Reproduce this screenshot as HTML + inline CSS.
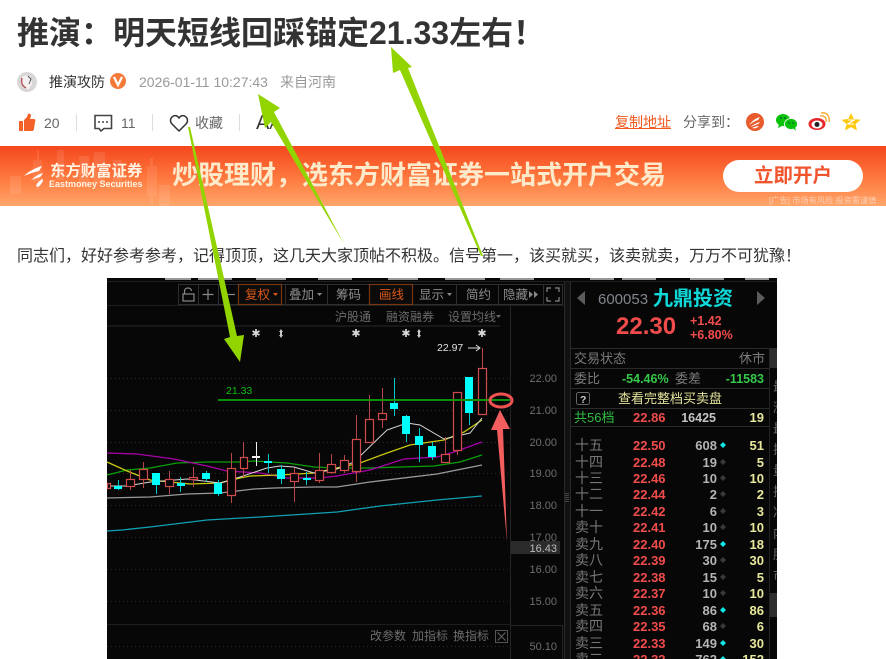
<!DOCTYPE html>
<html lang="zh-CN">
<head>
<meta charset="utf-8">
<title>推演</title>
<style>
html,body{margin:0;padding:0;background:#fff}
body{width:886px;height:659px;overflow:hidden;position:relative;font-family:"Liberation Sans","Noto Sans CJK SC",sans-serif;color:#333}
.a{position:absolute;white-space:nowrap}
svg{position:absolute;left:0;top:0}
svg text{font-family:"Liberation Sans","Noto Sans CJK SC",sans-serif}
.banner{position:absolute;left:0;top:146px;width:886px;height:60px;background:linear-gradient(#f4471d,#ff7a3f 55%,#ffa66b)}
</style>
</head>
<body>
<div class="a" style="left:17px;top:14px;font-size:32px;line-height:38px;font-weight:700;color:#333">推演&#65306;明天短线回踩锚定21.33左右&#65281;</div>

<div class="a" style="left:49px;top:73px;font-size:14px;line-height:18px;color:#333">推演攻防</div>
<div class="a" style="left:139px;top:73px;font-size:14px;line-height:18px;color:#999">2026-01-11 10:27:43</div>
<div class="a" style="left:280px;top:73px;font-size:14px;line-height:18px;color:#999">来自河南</div>

<div class="a" style="left:44px;top:114px;font-size:14px;line-height:18px;color:#666">20</div>
<div class="a" style="left:121px;top:114px;font-size:14px;line-height:18px;color:#666">11</div>
<div class="a" style="left:195px;top:114px;font-size:14px;line-height:18px;color:#666">收藏</div>
<div class="a" style="left:256px;top:111px;font-size:20px;line-height:24px;color:#333">A<span style="font-size:16px">A</span></div>
<div class="a" style="left:615px;top:113px;font-size:14px;line-height:18px;color:#f25a1e;text-decoration:underline">复制地址</div>
<div class="a" style="left:683px;top:113px;font-size:14px;line-height:18px;color:#666">分享到&#65306;</div>

<div class="banner"></div>
<div class="a" style="left:50px;top:161px;font-size:15.4px;line-height:22px;font-weight:700;color:#fff3e2">东方财富证券</div>
<div class="a" style="left:49px;top:178px;font-size:9px;line-height:12px;font-weight:700;color:#fff3e2">Eastmoney Securities</div>
<div class="a" style="left:172px;top:159px;font-size:26px;line-height:32px;font-weight:700;color:#fdeacb">炒股理财&#65292;选东方财富证券一站式开户交易</div>
<div class="a" style="left:723px;top:160px;width:140px;height:32px;border-radius:16px;background:#fff;text-align:center;font-size:19.5px;line-height:32px;font-weight:700;color:#f0552e">立即开户</div>
<div class="a" style="left:769px;top:195px;font-size:8.2px;line-height:11px;color:rgba(255,255,255,.5)">[广告] 市场有风险 投资需谨慎</div>

<div class="a" style="left:17px;top:246px;font-size:16px;line-height:22px;color:#333">同志们&#65292;好好参考参考&#65292;记得顶顶&#65292;这几天大家顶帖不积极。信号第一&#65292;该买就买&#65292;该卖就卖&#65292;万万不可犹豫&#65281;</div>

<svg width="886" height="659" viewBox="0 0 886 659">
<!-- avatar -->
<circle cx="27" cy="82" r="10" fill="#d9d6d6"/>
<path d="M22 77c2-2 7-2 9 0l1 7-3 5h-4l-3-5z" fill="#f2f0f0"/>
<path d="M22 78c-1 4 0 8 4 10" stroke="#b5525a" stroke-width="1.4" fill="none"/>
<path d="M28 76l3 3-2 5" stroke="#555" stroke-width="1" fill="none"/>
<!-- V badge -->
<circle cx="118" cy="81" r="8" fill="#f47a3a"/>
<path d="M114 77l4 8 4-8" stroke="#fff" stroke-width="2.2" fill="none"/>
<!-- thumb -->
<path d="M19 121h4v10h-4zM24 120l3-3 1-3c2-1 3 0 3 2l-1 3h4c1 0 2 1 1 3l-1 7c0 1-1 2-2 2H24z" fill="#f4622a"/>
<line x1="76.500" y1="114" x2="76.500" y2="131" stroke="#ddd"/>
<!-- comment -->
<path d="M95 115.500h16.500v13h-7.500l-3 2.500-2-2.500h-4z" fill="none" stroke="#444" stroke-width="1.600"/>
<circle cx="99" cy="122" r="1" fill="#444"/><circle cx="103" cy="122" r="1" fill="#444"/><circle cx="107" cy="122" r="1" fill="#444"/>
<line x1="152.500" y1="114" x2="152.500" y2="131" stroke="#ddd"/>
<!-- heart -->
<path d="M179 131l-7-7c-2-2-2-5 0-7 2-2 5-2 7 1 2-3 5-3 7-1 2 2 2 5 0 7z" fill="none" stroke="#333" stroke-width="1.500"/>
<line x1="239.500" y1="114" x2="239.500" y2="131" stroke="#ddd"/>
<!-- share icons -->
<circle cx="755" cy="122" r="9" fill="#e95b2c"/>
<path d="M749 125c3-4 7-7 11-8-1 1-1 2-2 3-3 1-6 3-9 5zM750 127c3-2 6-4 10-5-1 1-1 2-2 2-2 1-5 2-8 3zM752 128c2-1 5-2 7-2-2 2-4 3-7 2z" fill="#fff"/>
<ellipse cx="783" cy="120" rx="7" ry="6" fill="#0ac20a"/>
<path d="M779 124l-1 4 4-2z" fill="#0ac20a"/>
<ellipse cx="791" cy="124" rx="6.500" ry="5.500" fill="#0ac20a" stroke="#fff" stroke-width=".8"/>
<path d="M793 128l3 3-1-4z" fill="#0ac20a"/>
<circle cx="781" cy="118" r="1" fill="#063"/><circle cx="785" cy="118" r="1" fill="#063"/><circle cx="789" cy="123" r=".9" fill="#063"/><circle cx="793" cy="123" r=".9" fill="#063"/>
<ellipse cx="817" cy="124" rx="8.500" ry="6" fill="#e6262a"/>
<ellipse cx="817" cy="124.500" rx="5.500" ry="4" fill="#fff"/>
<circle cx="817" cy="124.500" r="2.500" fill="#222"/>
<path d="M820 116c4-1 7 2 6 6M821 113c6-1 9 3 8 9" stroke="#f6a623" stroke-width="1.300" fill="none"/>
<path d="M851 113l2.800 6 6.700.7-5 4.400 1.500 6.400-6-3.400-6 3.400 1.500-6.400-5-4.400 6.700-.7z" fill="#fcc90f"/>
<path d="M848 120h6l-6 4h6" stroke="#fff" stroke-width="1.100" fill="none"/>

<!-- banner decor -->
<g fill="#fff" opacity=".09">
<rect x="10" y="176" width="11" height="18"/><rect x="33" y="160" width="9" height="22"/><rect x="57" y="150" width="7" height="30"/><rect x="79" y="156" width="10" height="30"/><rect x="94" y="152" width="11" height="32"/><rect x="113" y="160" width="9" height="28"/><rect x="147" y="166" width="10" height="30"/><rect x="159" y="185" width="11" height="21"/>
<rect x="150" y="158" width="3" height="46"/><rect x="37" y="150" width="2" height="40"/>
</g>
<path d="M24 176c5-5 11-8 18-10-1 2-2 3-3 5-5 1-10 3-15 5zM31 180c4-3 7-6 12-7-1 2-2 3-3 4-3 1-6 2-9 3zM36 186c1-3 4-6 7-7 0 3-2 6-5 8z" fill="#fff"/>

<!-- terminal bg -->
<rect x="107" y="278" width="670" height="381" fill="#070707"/>
<g fill="#c8c8c8" opacity=".75">
<rect x="165" y="278" width="26" height="2"/><rect x="198" y="278" width="34" height="2"/><rect x="256" y="278" width="30" height="2"/><rect x="318" y="278" width="34" height="2"/><rect x="388" y="278" width="30" height="2"/><rect x="445" y="278" width="40" height="2"/><rect x="500" y="278" width="34" height="2"/><rect x="590" y="278" width="24" height="2"/><rect x="622" y="278" width="34" height="2"/><rect x="690" y="278" width="34" height="2"/><rect x="745" y="278" width="24" height="2"/>
</g>
<rect x="107" y="281" width="670" height="1" fill="#1f1f1f"/>

<!-- toolbar -->
<g fill="none" stroke="#2e2e2e">
<rect x="178.500" y="284.500" width="384" height="20"/>
<path d="M198.500 284v21M218.500 284v21M285.500 284v21M327.500 284v21M412.500 284v21M456.500 284v21M498.500 284v21M543.500 284v21"/>
</g>
<rect x="238.500" y="284.500" width="43" height="20" fill="#0b0b0b" stroke="#7a3612" stroke-width="1.200"/>
<rect x="369.500" y="284.500" width="43" height="20" fill="#0b0b0b" stroke="#7a3612" stroke-width="1.200"/>
<g fill="none" stroke="#888" stroke-width="1.200">
<rect x="183" y="294" width="11" height="7"/>
<path d="M184.500 294v-3c0-4 7-4 7 0"/>
<path d="M208 289v11M202.500 294.500h11"/>
<path d="M226 294.500h9"/>
<path d="M547 292v-4h4M559 292v-4h-4M547 297v4h4M559 297v4h-4"/>
</g>
<g font-size="12.500" fill="#8c8c8c">
<text x="245" y="299" fill="#d9581a">复权</text>
<text x="289" y="299">叠加</text>
<text x="336" y="299">筹码</text>
<text x="379" y="299" fill="#d9581a">画线</text>
<text x="419" y="299">显示</text>
<text x="466" y="299">简约</text>
<text x="503" y="299">隐藏</text>
</g>
<g fill="#888"><path d="M317 293h5l-2.500 3zM447 293h5l-2.500 3z"/><path d="M273 293h5l-2.500 3z" fill="#d9581a"/><path d="M529 291l4 3.500-4 3.500zM534 291l4 3.500-4 3.500z"/></g>

<rect x="107" y="305" width="458" height="1" fill="#1e1e1e"/>
<rect x="107" y="325" width="393" height="2" fill="#181818"/>
<g font-size="12" fill="#6c6c6c">
<text x="335" y="321">沪股通</text>
<text x="386" y="321">融资融券</text>
<text x="448" y="321">设置均线</text>
</g>
<path d="M496 315h5l-2.500 3z" fill="#666"/>

<!-- event marks -->
<g fill="#d8d8d8" font-size="11" text-anchor="middle">
<text x="256" y="337">✱</text><text x="356" y="337">✱</text><text x="406" y="337">✱</text><text x="482" y="337">✱</text>
</g>
<g fill="#c8c8c8"><path d="M281 329l2 3h-1v3h1l-2 3-2-3h1v-3h-1zM419 329l2 3h-1v3h1l-2 3-2-3h1v-3h-1z"/></g>

<!-- grid -->
<g stroke="#2a2a2a" stroke-dasharray="1 3" stroke-width="1">
<path d="M107 378.500h403M107 410.500h403M107 442.500h403M107 473.500h403M107 505.500h403M107 537.500h403M107 569.500h403M107 601.500h403M107 646.500h403"/>
</g>
<path d="M510.500 305v354" stroke="#242424"/>
<path d="M107 624.500h403" stroke="#1e1e1e"/>
<path d="M511 625.500h51M562.500 625v34" stroke="#262626" fill="none"/>
<rect x="564" y="282" width="6" height="377" fill="#111"/>
<path d="M564.500 282v377M570.500 282v377" stroke="#2a2a2a"/>
<path d="M566 493v9M568 493v9" stroke="#777" stroke-dasharray="1 1"/>

<!-- axis -->
<g font-size="11" fill="#6e6e6e" text-anchor="end">
<text x="557" y="382">22.00</text><text x="557" y="414">21.00</text><text x="557" y="446">20.00</text><text x="557" y="477">19.00</text><text x="557" y="509">18.00</text><text x="557" y="541">17.00</text><text x="557" y="573">16.00</text><text x="557" y="605">15.00</text><text x="557" y="650">50.10</text>
</g>
<rect x="511" y="541" width="49" height="13" fill="#2b2b2b"/>
<text x="557" y="552" font-size="11" fill="#bdbdbd" text-anchor="end">16.43</text>
<g font-size="12" fill="#6c6c6c">
<text x="370" y="640">改参数</text><text x="412" y="640">加指标</text><text x="453" y="640">换指标</text>
</g>
<rect x="495.500" y="630.500" width="12" height="12" fill="none" stroke="#555"/>
<path d="M497.500 632.500l8 8M505.500 632.500l-8 8" stroke="#666"/>

<!-- MA lines -->
<g fill="none" stroke-width="1.300">
<polyline stroke="#10a0b4" points="107,531 122,530 150,527 207,520 260,517 307,514 337,512 380,506 437,500 482,496"/>
<polyline stroke="#9a9a9a" points="107,498 150,497 187,494 220,493 254,489 274,488 314,487 337,487 370,482 437,474 482,465"/>
<polyline stroke="#0aa00a" points="107,475 127,470 150,468 177,463 207,462 240,462 254,461 287,463 314,467 337,468 370,468 434,466 460,462 482,455"/>
<polyline stroke="#a800a8" points="107,453 137,454 174,459 207,466 227,471 260,473 287,478 320,478 337,476 370,470 404,459 437,457 454,452 482,442"/>
<polyline stroke="#c8c810" points="107,462 127,471 150,480 190,484 220,483 240,478 250,476 280,475 314,473 337,468 360,463 387,453 410,445 444,440 464,432 482,420"/>
<polyline stroke="#d8d8d8" stroke-width="1" points="107,486 127,486 150,482 187,479 220,483 240,477 267,468 280,466 294,467 314,473 337,469 354,462 387,430 407,423 420,425 444,439 470,433 482,418"/>
</g>

<!-- wicks -->
<g stroke-width="1" fill="none">
<path stroke="#b84646" d="M130.500 470v20M143.500 462v26M169.500 471v23M193.500 467v20M231.500 453v50M243.500 442v35M294.500 481v21M294.500 468v5M319.500 453v30M331.500 454v20M344.500 455v18M356.500 415v67M369.500 395v47M382.500 388v40M445.500 437v26M457.500 392v63M482.500 348v66"/>
<path stroke="#00c8c8" d="M118.500 480v10M156.500 473v21M180.500 477v15M206.500 471v11M218.500 480v16M268.500 454v19M281.500 465v19M306.500 472v13M394.500 378v38M406.500 415v27M419.500 428v34M432.500 442v18M469.500 377v48"/>
<path stroke="#f0f0f0" d="M256.500 442v24"/>
</g>
<!-- bodies -->
<g fill="#060606" stroke="#d04c4c" stroke-width="1.200">
<rect x="107.500" y="483.500" width="3" height="5"/>
<rect x="126.500" y="479.500" width="8" height="7"/>
<rect x="139.500" y="469.500" width="8" height="10"/>
<rect x="165.500" y="479.500" width="8" height="7"/>
<rect x="189.500" y="477.500" width="8" height="2"/>
<rect x="227.500" y="468.500" width="8" height="27"/>
<rect x="240.500" y="457.500" width="7" height="11"/>
<rect x="290.500" y="473.500" width="8" height="8"/>
<rect x="315.500" y="470.500" width="8" height="10"/>
<rect x="327.500" y="464.500" width="8" height="8"/>
<rect x="340.500" y="460.500" width="8" height="10"/>
<rect x="352.500" y="439.500" width="8" height="32"/>
<rect x="365.500" y="419.500" width="8" height="23"/>
<rect x="378.500" y="413.500" width="8" height="6"/>
<rect x="441.500" y="454.500" width="8" height="8"/>
<rect x="453.500" y="392.500" width="8" height="58"/>
<rect x="478.500" y="368.500" width="8" height="46"/>
</g>
<g fill="#00ffff">
<rect x="114" y="486" width="8" height="3"/>
<rect x="152" y="473" width="8" height="12"/>
<rect x="177" y="483" width="8" height="3"/>
<rect x="202" y="473" width="8" height="6"/>
<rect x="214" y="483" width="8" height="11"/>
<rect x="264" y="461" width="8" height="2"/>
<rect x="277" y="469" width="8" height="10"/>
<rect x="303" y="478" width="8" height="2"/>
<rect x="390" y="403" width="8" height="6"/>
<rect x="402" y="416" width="8" height="18"/>
<rect x="415" y="436" width="8" height="9"/>
<rect x="428" y="446" width="8" height="11"/>
<rect x="465" y="377" width="8" height="36"/>
</g>
<rect x="252" y="456" width="8" height="2" fill="#f0f0f0"/>

<!-- 21.33 line -->
<rect x="218" y="399" width="292" height="2" fill="#0a900a"/>
<text x="226" y="394" font-size="10.500" fill="#12c012">21.33</text>
<text x="437" y="351" font-size="10.500" fill="#e0e0e0">22.97</text>
<path d="M468 348h12M476 345l4 3-4 3" stroke="#ddd" fill="none"/>

<!-- right panel -->
<path d="M585 291l-8 7 8 7zM757 291l8 7-8 7z" fill="#5c5c5c"/>
<text x="598" y="304" font-size="15" fill="#80868e">600053</text>
<text x="653" y="305" font-size="20" font-weight="700" fill="#0fd8d8">九鼎投资</text>
<text x="616" y="334" font-size="24" font-weight="700" fill="#f04c4c">22.30</text>
<text x="690" y="325" font-size="12.500" font-weight="700" fill="#f04c4c">+1.42</text>
<text x="690" y="339" font-size="12.500" font-weight="700" fill="#f04c4c">+6.80%</text>
<g stroke="none" fill="#2a2a2a">
<rect x="571" y="348" width="198" height="1"/>
<rect x="571" y="368" width="198" height="1"/>
<rect x="571" y="388" width="198" height="1"/>
<rect x="571" y="408" width="198" height="1"/>
<rect x="571" y="426" width="198" height="1"/>
</g>
<path d="M769.500 348v311" stroke="#242424"/>
<rect x="770" y="348" width="7" height="20" fill="#2e2e2e"/>
<rect x="770" y="593" width="7" height="24" fill="#2e2e2e"/>
<g font-size="13" fill="#7a7a7a">
<text x="574" y="363">交易状态</text>
<text x="739" y="363">休市</text>
<text x="574" y="383">委比</text>
<text x="675" y="383">委差</text>
</g>
<g font-size="12.500" font-weight="700" fill="#35c84a">
<text x="622" y="383">-54.46%</text>
<text x="764" y="383" text-anchor="end">-11583</text>
</g>
<rect x="576.500" y="392.500" width="13" height="12" rx="2" fill="none" stroke="#666"/>
<text x="580" y="403" font-size="10.500" font-weight="700" fill="#ccc">?</text>
<text x="618" y="403" font-size="13" fill="#e2e29a">查看完整档买卖盘</text>
<text x="574" y="422" font-size="13" fill="#2fbe44">共56档</text>
<text x="633" y="422" font-size="13" font-weight="700" fill="#f04c4c">22.86</text>
<text x="716" y="422" font-size="12.500" font-weight="700" fill="#c4c4c4" text-anchor="end">16425</text>
<text x="764" y="422" font-size="13" font-weight="700" fill="#e8e89c" text-anchor="end">19</text>

<g font-size="14" fill="#767676">
<text x="575" y="450">十五</text><text x="575" y="467">十四</text><text x="575" y="483">十三</text><text x="575" y="499">十二</text><text x="575" y="516">十一</text><text x="575" y="532">卖十</text><text x="575" y="549">卖九</text><text x="575" y="565">卖八</text><text x="575" y="582">卖七</text><text x="575" y="598">卖六</text><text x="575" y="615">卖五</text><text x="575" y="631">卖四</text><text x="575" y="648">卖三</text><text x="575" y="664">卖二</text>
</g>
<g font-size="13" font-weight="700" fill="#f04c4c">
<text x="633" y="450">22.50</text><text x="633" y="467">22.48</text><text x="633" y="483">22.46</text><text x="633" y="499">22.44</text><text x="633" y="516">22.42</text><text x="633" y="532">22.41</text><text x="633" y="549">22.40</text><text x="633" y="565">22.39</text><text x="633" y="582">22.38</text><text x="633" y="598">22.37</text><text x="633" y="615">22.36</text><text x="633" y="631">22.35</text><text x="633" y="648">22.33</text><text x="633" y="664">22.32</text>
</g>
<g font-size="13" font-weight="700" fill="#b4b4b4" text-anchor="end">
<text x="717" y="450">608</text><text x="717" y="467">19</text><text x="717" y="483">10</text><text x="717" y="499">2</text><text x="717" y="516">6</text><text x="717" y="532">10</text><text x="717" y="549">175</text><text x="717" y="565">30</text><text x="717" y="582">15</text><text x="717" y="598">10</text><text x="717" y="615">86</text><text x="717" y="631">68</text><text x="717" y="648">149</text><text x="717" y="664">762</text>
</g>
<g font-size="13" font-weight="700" fill="#e8e89c" text-anchor="end">
<text x="764" y="450">51</text><text x="764" y="467">5</text><text x="764" y="483">10</text><text x="764" y="499">2</text><text x="764" y="516">3</text><text x="764" y="532">10</text><text x="764" y="549">18</text><text x="764" y="565">30</text><text x="764" y="582">5</text><text x="764" y="598">10</text><text x="764" y="615">86</text><text x="764" y="631">6</text><text x="764" y="648">30</text><text x="764" y="664">152</text>
</g>
<path fill="#10e8e8" d="M723 442l3 3-3 3-3-3zM723 541l3 3-3 3-3-3zM723 607l3 3-3 3-3-3zM723 640l3 3-3 3-3-3zM723 656l3 3-3 3-3-3z"/>
<path fill="#3a3a3a" d="M723 459l3 3-3 3-3-3zM723 475l3 3-3 3-3-3zM723 491l3 3-3 3-3-3zM723 508l3 3-3 3-3-3zM723 524l3 3-3 3-3-3zM723 557l3 3-3 3-3-3zM723 574l3 3-3 3-3-3zM723 590l3 3-3 3-3-3zM723 623l3 3-3 3-3-3z"/>
<g font-size="13" fill="#6a6a6a">
<text x="773" y="391">最</text><text x="773" y="412">涨</text><text x="773" y="433">最</text><text x="773" y="454">振</text><text x="773" y="475">量</text><text x="773" y="496">换</text><text x="773" y="517">净</text><text x="773" y="538">内</text><text x="773" y="559">股</text><text x="773" y="580">市</text>
</g>
<!-- clip right edge of terminal -->
<rect x="777" y="278" width="109" height="381" fill="#fff"/>

<!-- annotation arrows -->
<path fill="#92d400" d="M391 47L412 67 408 68 483 256 481 256 400 70 393 73Z"/>
<path fill="#92d400" d="M258 94L280 108 274 112 344 244 271 122 265 128Z"/>
<path fill="#92d400" d="M188 127L190 127 237 336 244 335 240 362 224 339 230 337Z"/>
<path fill="#f25d5d" d="M500 410L510 429 503 429 507 542 497 430 491 430Z"/>
<ellipse cx="501" cy="400.500" rx="11" ry="6.500" fill="none" stroke="#f05252" stroke-width="3"/>
</svg>
</body>
</html>
